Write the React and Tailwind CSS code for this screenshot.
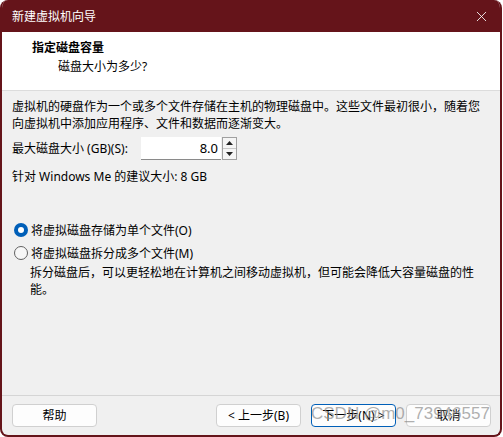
import { X } from 'lucide-react'

const FONT = { fontFamily: '"Noto Sans", "Noto Sans CJK SC", sans-serif' }

function Radio({ checked, label }){
  return (
    <div className="flex items-center h-[22px]">
      {checked ? (
        <span className="w-[14px] h-[14px] rounded-full bg-[#005fb8] flex items-center justify-center ml-[12px]">
          <span className="w-[6px] h-[6px] rounded-full bg-white" />
        </span>
      ) : (
        <span className="w-[14px] h-[14px] rounded-full border border-[#616161] bg-[#f7f7f7] ml-[12px]" />
      )}
      <span className="ml-[3px]">{label}</span>
    </div>
  )
}

function Btn({ children, focus }){
  return (
    <button className={'h-[23px] w-[85px] rounded-[4px] bg-[#fdfdfd] text-[12px] text-black ' + (focus ? 'border border-[#005fb8]' : 'border border-[#d0d0d0]')}>
      {children}
    </button>
  )
}

export default function App(){
  return (
    <div className="w-[503px] h-[437px] bg-white relative text-[12px] text-black leading-[17px]" style={FONT}>
      <div className="w-[502px] h-[437px] flex flex-col rounded-lg overflow-hidden border-x-2 border-b-2 border-[#65141a] bg-[#f0f0f0]">
        {/* title bar */}
        <div className="h-[32px] shrink-0 bg-[#65141a] flex items-center justify-between pl-[12px] pr-[12px] -mx-[2px]">
          <span className="text-white text-[12px]">新建虚拟机向导</span>
          <X size={17} strokeWidth={1.2} className="text-white" />
        </div>

        {/* header */}
        <div className="h-[59px] shrink-0 bg-white border-b border-[#dcdcdc] pt-[7px]">
          <div className="pl-[30px] font-bold">指定磁盘容量</div>
          <div className="pl-[56px] mt-[2px]">磁盘大小为多少?</div>
        </div>

        {/* body */}
        <div className="flex-1 pt-[7px] pl-[10px] pr-[4px]">
          <p>虚拟机的硬盘作为一个或多个文件存储在主机的物理磁盘中。这些文件最初很小，随着您<br />向虚拟机中添加应用程序、文件和数据而逐渐变大。</p>

          <div className="flex items-center mt-[5px]">
            <span className="w-[129px]">最大磁盘大小 (GB)(S):</span>
            <div className="flex items-center h-[23px]">
              <div className="w-[80px] h-[23px] bg-white border-b border-[#8a8a8a] flex items-center justify-end pr-[3px] text-[13px]">8.0</div>
              <div className="w-[15px] h-[23px] ml-[1px] flex flex-col border border-[#a0a0a0] bg-[#f5f5f5]">
                <div className="flex-1 flex items-center justify-center border-b border-[#c8c8c8]">
                  <svg width="7" height="4" viewBox="0 0 7 4"><path d="M3.5 0 L7 4 L0 4 Z" fill="#222" /></svg>
                </div>
                <div className="flex-1 flex items-center justify-center">
                  <svg width="7" height="4" viewBox="0 0 7 4"><path d="M0 0 L7 0 L3.5 4 Z" fill="#222" /></svg>
                </div>
              </div>
            </div>
          </div>

          <div className="mt-[8px]">针对 Windows Me 的建议大小: 8 GB</div>

          <div className="mt-[34px] -ml-[10px] flex flex-col gap-[1px]">
            <Radio checked label="将虚拟磁盘存储为单个文件(O)" />
            <Radio label="将虚拟磁盘拆分成多个文件(M)" />
          </div>
          <p className="pl-[18px]">拆分磁盘后，可以更轻松地在计算机之间移动虚拟机，但可能会降低大容量磁盘的性<br />能。</p>
        </div>

        {/* footer */}
        <div className="h-[40px] shrink-0 border-t border-[#d5d5d5] flex items-start pt-[8px] pl-[10px] pr-[9px]">
          <Btn>帮助</Btn>
          <div className="flex-1" />
          <div className="flex gap-[10px]">
            <Btn>&lt; 上一步(B)</Btn>
            <Btn focus>下一步(N) &gt;</Btn>
            <Btn>取消</Btn>
          </div>
        </div>
      </div>

      {/* watermark */}
      <div className="absolute left-[311px] top-[405px] text-[17px] text-[#8c8c8c]/70 pointer-events-none" style={{ fontFamily: '"Liberation Sans", sans-serif' }}>
        CSDN @m0_73946557
      </div>
    </div>
  )
}
